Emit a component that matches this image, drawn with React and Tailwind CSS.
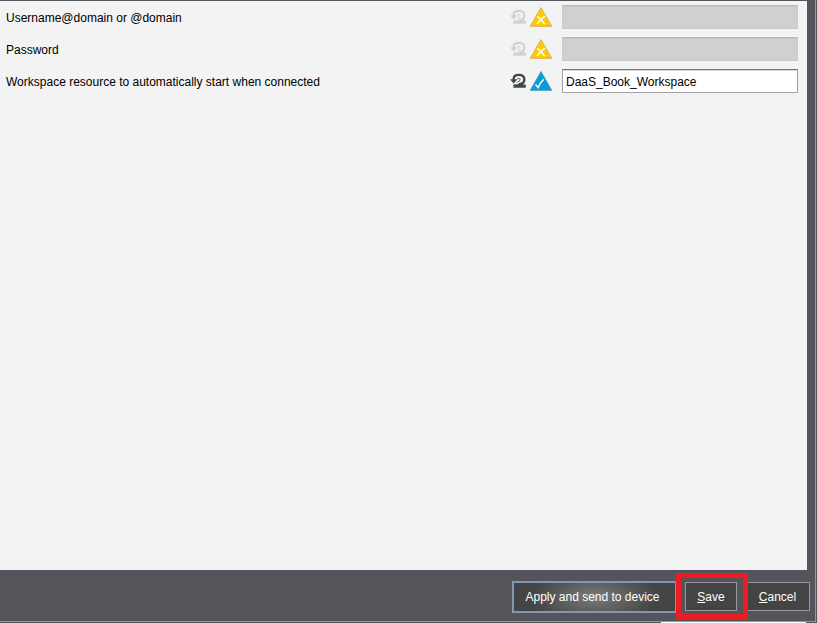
import React from "react";

function ResetIcon({ className }) {
  return (
    <svg viewBox="0 0 16 16" className={`h-4 w-4 ${className}`} fill="none" aria-hidden="true">
      <path
        d="M3.700 7V5.600C3.700 3 5.600 1.900 8.800 1.900c3.600 0 5.500 1.600 5.500 4.600 0 2.800-1.900 4.500-4.900 4.500"
        stroke="currentColor"
        strokeWidth="2.400"
      />
      <path d="M7 6.200c.6-1 3-1.200 3.200.4.100 1.300-2 1.500-2.800 3" stroke="currentColor" strokeWidth="1" />
      <path d="M0 6.200h7.400L3.700 10.400z" fill="currentColor" />
      <path d="M3.400 11.600l4.600-.4 1-1.200h3.500l.5 1.600h2.800v3.200H3.400z" fill="currentColor" />
    </svg>
  );
}

function StateIcon({ active }) {
  return (
    <svg viewBox="0 0 24 20" className="h-5 w-6" fill="none" aria-hidden="true">
      <path
        d="M12 .6 22.700 19.300H1.300z"
        fill={active ? "#049cdb" : "#fecb00"}
        stroke={active ? "#4a9cc4" : "#d3b25c"}
        strokeWidth="1"
        strokeLinejoin="round"
      />
      {active ? (
        <path d="M6.500 13.500l2.700 3c1-2.800 3-5.800 5.600-8.300" stroke="#fff" strokeWidth="1.500" />
      ) : (
        <path
          d="M8.200 9.200c2.600 1.900 5.400 4.700 7.600 8M16 9.200c-2.800 1.900-5.800 4.500-8 8"
          stroke="#fff"
          strokeWidth="1.400"
        />
      )}
    </svg>
  );
}

function SettingRow({ id, label, type = "text", value = "", active = false }) {
  return (
    <div className="flex h-6 items-center">
      <label htmlFor={id} className="min-w-0 flex-1 pt-0.5 whitespace-nowrap">
        {label}
      </label>
      <button
        type="button"
        aria-label={`Reset ${label}`}
        disabled={!active}
        className="mr-[3px] shrink-0"
      >
        <ResetIcon className={active ? "text-[#3e4a42]" : "text-[#d2d2d2]"} />
      </button>
      <button type="button" aria-label={`Toggle ${label}`} className="mr-[9px] shrink-0">
        <StateIcon active={active} />
      </button>
      <input
        id={id}
        type={type}
        defaultValue={value}
        disabled={!active}
        className="h-6 w-[236px] shrink-0 border border-[#a0a0a0] border-t-[#777777] bg-white px-[3px] pt-0.5 text-black shadow-[inset_0_1px_0_#d8d8d8] outline-none disabled:border-[#cacaca] disabled:border-t-[#b8b8b8] disabled:bg-[#d0d0d0] disabled:shadow-[inset_0_1px_0_#c6c6c6]"
      />
    </div>
  );
}

export default function App() {
  return (
    <div className="flex min-h-screen flex-col bg-[#54555a] font-['Liberation_Sans',Arial,sans-serif] text-[12px] leading-4 text-black">
      <div className="mr-px flex flex-1 flex-col border-r border-[#96969a] pt-px">
        <main className="mr-2 flex flex-1 flex-col gap-2 bg-[#f3f3f3] pt-1 pr-[9px] pl-[6px]">
          <SettingRow id="username" label="Username@domain or @domain" />
          <SettingRow id="password" label="Password" type="password" />
          <SettingRow
            id="workspace"
            label="Workspace resource to automatically start when connected"
            value="DaaS_Book_Workspace"
            active
          />
        </main>
        <footer className="flex h-[52px] items-center justify-end gap-2 border-b border-[#96969a] pt-[2px] pr-[5px] text-white [text-shadow:1px_1px_1px_#222222]">
          <button
            type="button"
            className="h-8 w-[165px] border-2 border-[#8098b4] bg-[radial-gradient(ellipse_64px_28px_at_center,#7a7a7a_0%,#444444_100%)] pr-1"
          >
            Apply and send to device
          </button>
          <div className="relative">
            <button type="button" className="block h-[29px] w-[52px] border border-[#98989c] bg-[#444444]">
              <span className="underline">S</span>ave
            </button>
            <div className="pointer-events-none absolute -top-[9px] -right-[11px] -bottom-2 -left-[9px] z-10 border-[5px] border-[#ed1c24]" />
          </div>
          <button type="button" className="h-[29px] w-[65px] border border-[#98989c] bg-[#444444]">
            <span className="underline">C</span>ancel
          </button>
        </footer>
      </div>
      <div className="flex h-px justify-end pr-[11px]">
        <div className="w-[145px] bg-white" />
      </div>
    </div>
  );
}
